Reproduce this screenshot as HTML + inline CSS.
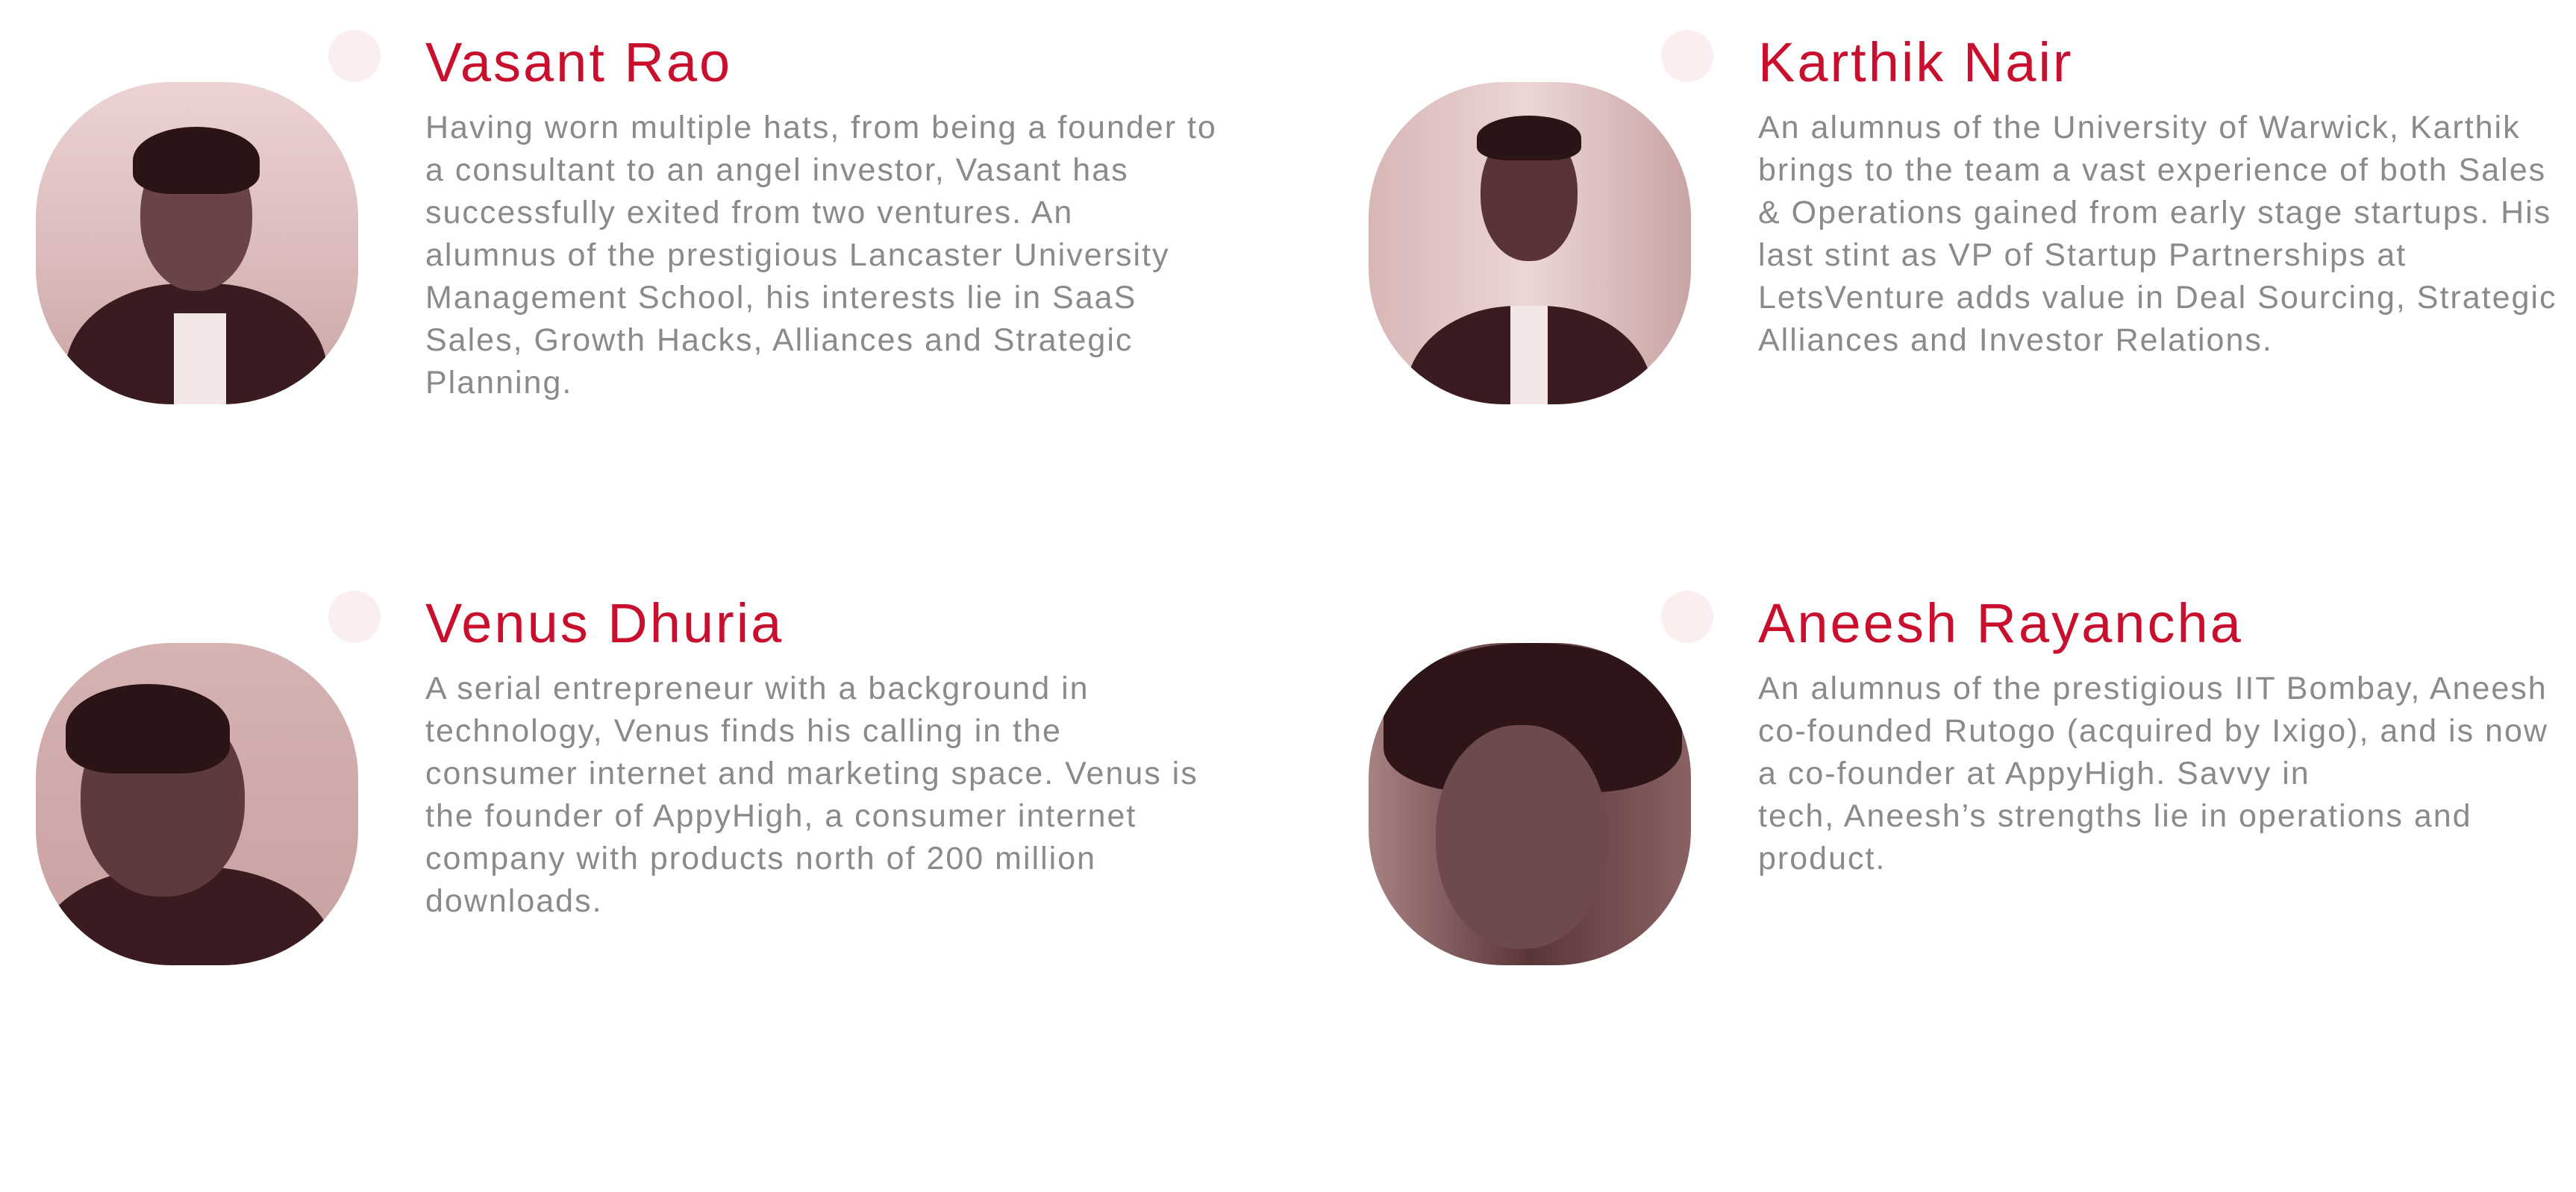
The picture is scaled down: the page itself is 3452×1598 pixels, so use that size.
<!DOCTYPE html>
<html><head><meta charset="utf-8"><style>
html,body{margin:0;padding:0;background:#fff;width:3452px;height:1598px;overflow:hidden}
.card{position:absolute;width:1700px;height:700px}
.blob{position:absolute;left:440px;top:40px;width:70px;height:70px;border-radius:35px;background:#fbeeee}
.photo{position:absolute;left:48px;top:110px;width:432px;height:432px;border-radius:42%;overflow:hidden;background:linear-gradient(180deg,#ecd3d3 0%,#d9b8b8 60%,#c9a5a5 100%)}
.photo .body{position:absolute;left:40px;top:270px;width:350px;height:260px;border-radius:45% 45% 0 0;background:#3a1c20}
.photo .head{position:absolute;left:140px;top:80px;width:150px;height:200px;border-radius:48%;background:#6a4346}
.photo .hair{position:absolute;left:130px;top:60px;width:170px;height:90px;border-radius:50% 50% 30% 30%;background:#2a1416}
.name{position:absolute;left:570px;top:47px;font:74px/1 "Liberation Sans",sans-serif;color:#c8102e;white-space:nowrap;letter-spacing:3px}
.txt{position:absolute;left:570px;top:143px;font:43px/57px "Liberation Sans",sans-serif;color:#8a8a8a;white-space:nowrap;letter-spacing:2px}
</style></head><body>

<div class="card" style="left:0;top:0">
<div class="blob"></div>
<div class="photo"><div class="body"></div><div class="head"></div><div class="hair"></div><div style="position:absolute;left:185px;top:310px;width:70px;height:130px;background:#f2e6e6"></div></div>
<div class="name">Vasant Rao</div>
<div class="txt">Having worn multiple hats, from being a founder to<br>a consultant to an angel investor, Vasant has<br>successfully exited from two ventures. An<br>alumnus of the prestigious Lancaster University<br>Management School, his interests lie in SaaS<br>Sales, Growth Hacks, Alliances and Strategic<br>Planning.</div>
</div>

<div class="card" style="left:1786px;top:0">
<div class="blob"></div>
<div class="photo" style="background:linear-gradient(90deg,#d8b6b6 0%,#ecd6d6 50%,#c9a3a3 100%)"><div class="body" style="left:50px;top:300px;width:330px"></div><div class="head" style="left:150px;top:60px;width:130px;height:180px;background:#5a3337"></div><div class="hair" style="left:145px;top:45px;width:140px;height:60px"></div><div style="position:absolute;left:190px;top:300px;width:50px;height:140px;background:#f2e6e6"></div></div>
<div class="name">Karthik Nair</div>
<div class="txt">An alumnus of the University of Warwick, Karthik<br>brings to the team a vast experience of both Sales<br>&amp; Operations gained from early stage startups. His<br>last stint as VP of Startup Partnerships at<br>LetsVenture adds value in Deal Sourcing, Strategic<br>Alliances and Investor Relations.</div>
</div>

<div class="card" style="left:0;top:752px">
<div class="blob"></div>
<div class="photo" style="background:linear-gradient(180deg,#d6b2b2 0%,#c8a0a0 100%)"><div class="body" style="left:0;top:300px;width:400px"></div><div class="head" style="left:60px;top:80px;width:220px;height:260px;background:#5e3a3d"></div><div class="hair" style="left:40px;top:55px;width:220px;height:120px"></div></div>
<div class="name">Venus Dhuria</div>
<div class="txt">A serial entrepreneur with a background in<br>technology, Venus finds his calling in the<br>consumer internet and marketing space. Venus is<br>the founder of AppyHigh, a consumer internet<br>company with products north of 200 million<br>downloads.</div>
</div>

<div class="card" style="left:1786px;top:752px">
<div class="blob"></div>
<div class="photo" style="background:linear-gradient(90deg,#a88283 0%,#5a3538 50%,#8a6264 100%)"><div class="hair" style="left:20px;top:0;width:400px;height:200px;background:#2e1517"></div><div class="head" style="left:90px;top:110px;width:230px;height:300px;background:#6e4a4d"></div></div>
<div class="name">Aneesh Rayancha</div>
<div class="txt">An alumnus of the prestigious IIT Bombay, Aneesh<br>co-founded Rutogo (acquired by Ixigo), and is now<br>a co-founder at AppyHigh. Savvy in<br>tech, Aneesh’s strengths lie in operations and<br>product.</div>
</div>

</body></html>
